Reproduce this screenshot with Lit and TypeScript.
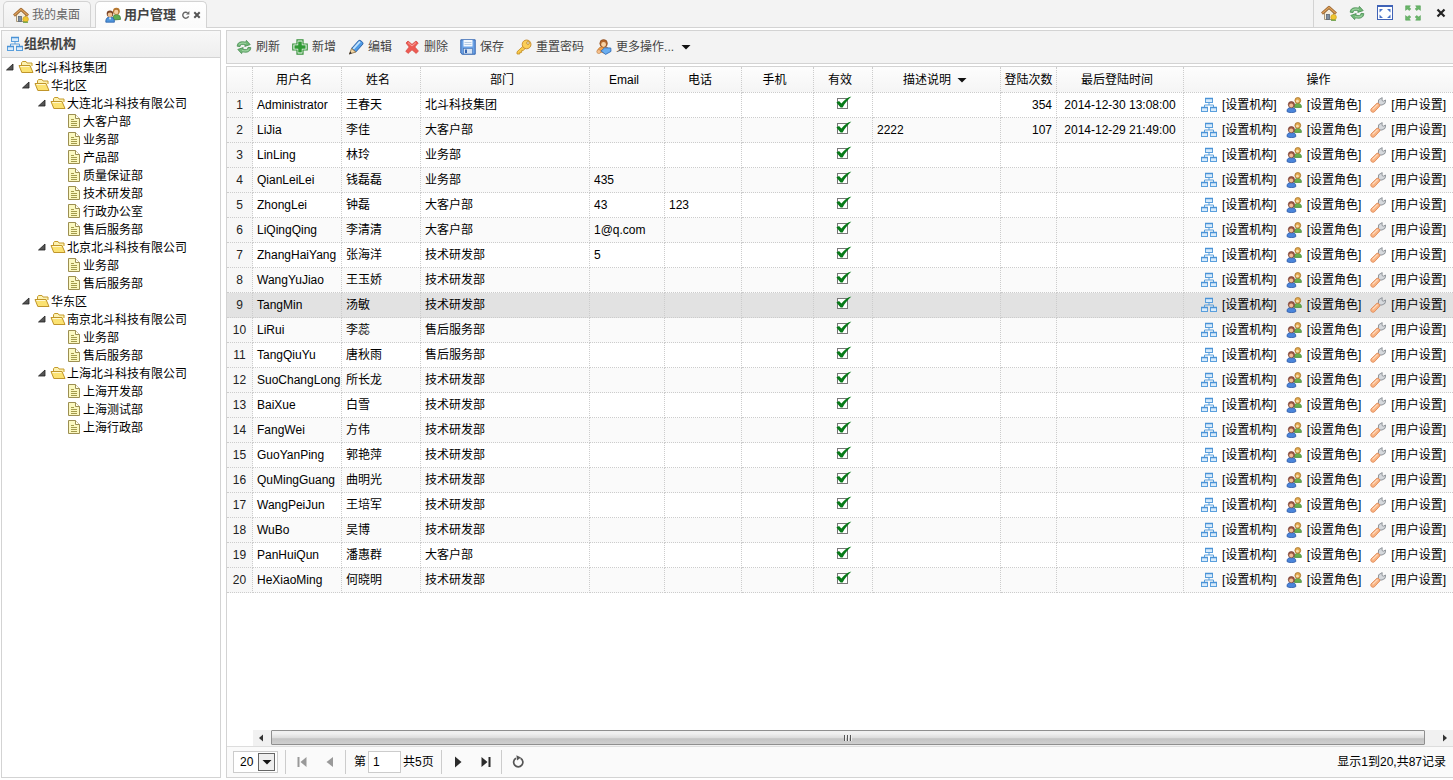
import { LitElement, html, css, svg, nothing, TemplateResult } from "lit";
import { customElement, property, state } from "lit/decorators.js";
import { classMap } from "lit/directives/class-map.js";

/* ---------- icons, all on a 16px grid ---------- */

const shapes: Record<string, TemplateResult> = {
  home: svg`
    <path d="M3.5 8 V14.5 H12.5 V8 L8 3.8Z" fill="#f4ecdc" stroke="#a89878"/>
    <rect x="5.5" y="9.5" width="3" height="5" fill="#7e8ea0" stroke="#5c6876" stroke-width=".8"/>
    <path d="M1 8.6 L8 2.2 L15 8.6" fill="none" stroke="#9a6630" stroke-width="2.8" stroke-linejoin="round"/>
    <path d="M1.4 8.3 L8 2.4 L14.6 8.3" fill="none" stroke="#dfa25c" stroke-width="1.2"/>
    <circle cx="12.6" cy="12.2" r="2.8" fill="#f0c630" stroke="#c79a1c" stroke-width=".6"/>
    <path d="M10 15.2 H15" stroke="#5f9a3c" stroke-width="1.2"/>`,
  users: svg`
    <path d="M8 13 C7.6 8.8 9 7.6 11.6 7.6 C14.4 7.6 15.6 9.2 15.5 12.4Z" fill="#5fae50" stroke="#3d7c38" stroke-width=".8"/>
    <circle cx="11.4" cy="4.2" r="3.4" fill="#b5762f"/><circle cx="11.2" cy="4.9" r="2.2" fill="#f6cfa0"/>
    <path d="M.8 15.2 C.6 11.6 2.2 10 5 10 C8 10 9.6 11.6 9.4 15.2Z" fill="#4f96dd" stroke="#2a5fa8" stroke-width=".8"/>
    <path d="M4 10.4 L5 13 L6.2 10.4Z" fill="#fff"/>
    <circle cx="5" cy="6.8" r="3.3" fill="#7c4526"/><circle cx="5" cy="7.7" r="2.3" fill="#f3c596"/>`,
  role: svg`
    <path d="M8.4 10.4 C8.2 7.6 9.4 6.4 11.6 6.4 C14 6.4 15.5 7.4 15.4 10.4Z" fill="#6ab04c" stroke="#478a36" stroke-width=".8"/>
    <circle cx="11.8" cy="3.4" r="2.9" fill="#e0a84e" stroke="#a8742a" stroke-width=".8"/><circle cx="11.4" cy="4.2" r="1.4" fill="#f7dcae"/>
    <path d="M1 14.6 C.8 11.6 2.6 10.6 5.4 10.6 C8.2 10.6 10 11.6 9.8 14.6 C8 16 3 16 1 14.6Z" fill="#4a86dc" stroke="#2b58a6" stroke-width=".8"/>
    <circle cx="5.4" cy="7.6" r="3.1" fill="#9c5a44" stroke="#74382c" stroke-width=".7"/><circle cx="5.2" cy="8.5" r="2" fill="#f0bd96"/>`,
  org: svg`
    <g fill="#d9ebfb" stroke="#5a9fdc"><rect x="4.5" y="1.5" width="7" height="4"/><rect x=".5" y="10.5" width="6" height="4"/><rect x="9.5" y="10.5" width="6" height="4"/></g>
    <path d="M8 5.5 V8 M3.5 10.5 V8 H12.5 V10.5" fill="none" stroke="#5a9fdc"/>
    <path d="M4 1.5 H12 M0 10.5 H7 M9 10.5 H16" stroke="#4a92d6" stroke-width="1.4"/>`,
  folder: svg`
    <path d="M3.5 13 V3.8 L4.5 2.5 H8 L9 4 H14 V7" fill="#fdf2b0" stroke="#c59b2c"/>
    <path d="M1 6.5 H12 L15 13.5 H3.8Z" fill="#fbe272" stroke="#c0952a" stroke-linejoin="round"/>
    <path d="M2.4 7.5 H11.4" stroke="#fff8d0"/>`,
  page: svg`
    <path d="M2.5 1.5 H9.5 L13.5 5.5 V14.5 H2.5Z" fill="#fbf8c0" stroke="#9c8f52"/>
    <path d="M9.5 1.5 V5.5 H13.5" fill="#fffef0" stroke="#9c8f52"/>
    <path d="M5 6.5 H8 M5 8.5 H11 M5 10.5 H11 M5 12.5 H11" stroke="#a39a4c"/>`,
  refresh: svg`
    <path d="M1.2 7.2 C1.4 3.4 4.6 2 9.6 3.2 L10.4 1.4 L14.2 5.6 L8.8 7.4 L9.2 5.8 C6 4.8 4.4 5.4 4 7.6Z" fill="#72b878" stroke="#468c50" stroke-width=".8" stroke-linejoin="round"/>
    <path d="M14.8 8.6 C14.6 12.6 11.4 14 6.4 12.8 L5.6 14.6 L1.8 10.4 L7.2 8.6 L6.8 10.2 C10 11.2 11.6 10.6 12 8.4Z" fill="#72b878" stroke="#468c50" stroke-width=".8" stroke-linejoin="round"/>
    <path d="M2.8 5.6 C4.4 3.8 7 3.8 10 4.4 M13.2 10.4 C11.6 12.2 9 12.2 6 11.6" fill="none" stroke="#b4dfb6" stroke-width=".8"/>`,
  add: svg`
    <path d="M5 .8 H11 V5 H15.2 V11 H11 V15.2 H5 V11 H.8 V5 H5Z" fill="#fff" stroke="#36913a" stroke-width="1.2"/>
    <path d="M8 2.4 V13.6 M2.4 8 H13.6" stroke="#2f9a34" stroke-width="3.6"/>`,
  edit: svg`
    <path d="M3.6 9.4 L10.6 1.6 C12 .4 15.9 3.6 14.8 5.2 L7.8 13Z" fill="#4f9be6" stroke="#23589e" stroke-width=".9"/>
    <path d="M5.2 10 L12 2.6" stroke="#c4e4fd" stroke-width="1.8"/>
    <path d="M3.6 9.4 L7.8 13 L1.4 15 Z" fill="#f4d8a4" stroke="#86683c" stroke-width=".8"/>
    <path d="M1 15.4 L2.2 12.6 L3.8 14.2Z" fill="#2c2c34"/>`,
  remove: svg`
    <path d="M2 4 L4 2 L8 5.4 L12 2 L14.2 4 L10.8 8 L14.4 12 L12.2 14.4 L8 10.8 L4 14.4 L1.8 12.2 L5.2 8Z" fill="#ee5a52" stroke="#d64b45" stroke-width=".8" stroke-linejoin="round"/>
    <path d="M4 3.6 L8 7 L12 3.6" fill="none" stroke="#f9a59e"/>`,
  save: svg`
    <path d="M.8 .8 H15.2 V15.2 H2 L.8 14Z" fill="#6aa2e6" stroke="#3464b0"/>
    <rect x="3.5" y="1" width="9" height="6.5" fill="#f3f8fe"/><path d="M4.5 3.5 H11.5 M4.5 5.5 H11.5" stroke="#a8c2de" stroke-width=".8"/>
    <rect x="3.5" y="9.5" width="9" height="5.5" fill="#d6e3f3" stroke="#4a78b8" stroke-width=".7"/><rect x="5" y="10.5" width="2" height="3.5" fill="#3464b0"/>`,
  key: svg`
    <path d="M6.8 7.4 L1 12.8 V15 H3.8 V13.4 H5.6 V11.6 H7.2 L9 9.6Z" fill="#fbca4c" stroke="#c08a1e" stroke-width=".8" stroke-linejoin="round"/>
    <circle cx="10.6" cy="5.4" r="4.4" fill="#fbce58" stroke="#c4882a" stroke-width=".9"/>
    <circle cx="12" cy="4" r="1.3" fill="#fff" stroke="#b27c1e" stroke-width=".8"/>`,
  more: svg`
    <path d="M1.6 12 C2 8.6 5 7.6 8 7.6 C11 7.6 13 9 13 12 L8 14Z" fill="#f0a04a" stroke="#b86a28" stroke-width=".7"/>
    <circle cx="7.6" cy="4.4" r="3.8" fill="#b5672c" stroke="#85461d" stroke-width=".6"/><circle cx="7.6" cy="5.5" r="2.4" fill="#f8d2a4"/>
    <path d="M5 12 L8.6 8.8 L14.8 9 L15 12.4 L9.6 15.4Z" fill="#6aaef0" stroke="#2c67b4" stroke-width=".8" stroke-linejoin="round"/>
    <circle cx="2.8" cy="12.6" r="2" fill="#f6c08c" stroke="#b97a3e" stroke-width=".6"/>`,
  wrench: svg`
    <path d="M8.4 6.2 L8.6 2.8 L12.2 .6 L12 3.4 L13.2 4.2 L15.7 3 L15 6.4 L12 8 L10 8 L8.6 9Z" fill="#d6d9dd" stroke="#868b92" stroke-width=".9" stroke-linejoin="round"/>
    <path d="M1 12 L7 6.2 C8.6 6 10.2 7.6 9.8 9 L4.2 15 C2 16 0 14 1 12Z" fill="#f9b381" stroke="#e08a58" stroke-width=".9"/>
    <path d="M2.6 12.4 L7.6 7.6" stroke="#fddcc2" stroke-width="1.2"/>`,
  full: svg`
    <rect x=".5" y=".5" width="15" height="14" fill="#fff" stroke="#3f62b6"/><path d="M.5 1.5 H15.5" stroke="#3f62b6"/>
    <path d="M2.5 4 H6 L2.5 7.4Z M13.5 4 H10 L13.5 7.4Z M2.5 13 H6 L2.5 9.6Z M13.5 13 H10 L13.5 9.6Z" fill="#4a74c8"/>`,
  expand: svg`
    <g fill="#6ab66a" stroke="#4a9a4e" stroke-width=".5"><path d="M.6 .8 H5.4 L4.2 2.2 L5.8 4 L4.4 5.4 L2.2 4 L.6 5.4Z"/><path d="M15.4 .8 H10.6 L11.8 2.2 L10.2 4 L11.6 5.4 L13.8 4 L15.4 5.4Z"/><path d="M.6 15.2 H5.4 L4.2 13.8 L5.8 12 L4.4 10.6 L2.2 12 L.6 10.6Z"/><path d="M15.4 15.2 H10.6 L11.8 13.8 L10.2 12 L11.6 10.6 L13.8 12 L15.4 10.6Z"/></g>`,
  close: svg`<path d="M4.5 4.5 L11.5 11.5 M11.5 4.5 L4.5 11.5" stroke="#222" stroke-width="2.2"/>`,
  down: svg`<path d="M3.5 6 H12.5 L8 10.5Z" fill="#111"/>`,
  node: svg`<path d="M11 5 V11 H4.5Z" fill="#555" stroke="#222" stroke-width=".8"/>`,
  first: svg`<path d="M3.5 3 H5.5 V13 H3.5Z M12.5 3 V13 L6.5 8Z" fill="#999"/>`,
  prev: svg`<path d="M11 3 V13 L4.5 8Z" fill="#999"/>`,
  next: svg`<path d="M5 2.5 V13.5 L11.5 8Z" fill="#2b2b2b"/>`,
  last: svg`<path d="M3.5 3 V13 L9.5 8Z M10.5 3 H12.5 V13 H10.5Z" fill="#2b2b2b"/>`,
  reload: svg`<path d="M10.5 4.2 A4.6 4.6 0 1 1 6 4.2" fill="none" stroke="#555" stroke-width="1.7"/><path d="M6.4 1.2 L11 3.4 L7 6.4Z" fill="#555"/>`,
  tabReload: svg`<path d="M10.6 9.2 A3 3 0 1 1 9.6 5.8" fill="none" stroke="#666" stroke-width="1.4"/><path d="M11.4 4 V7.6 H8Z" fill="#666"/>`,
  tabClose: svg`<path d="M5.3 5.3 L10.7 10.7 M10.7 5.3 L5.3 10.7" stroke="#555" stroke-width="2"/>`,
  left: svg`<path d="M9 4.5 V11.5 L5 8Z" fill="#333"/>`,
  right: svg`<path d="M6 4.5 V11.5 L10 8Z" fill="#333"/>`,
};

const icon = (name: string) =>
  html`<svg class="icon" width="16" height="16" viewBox="0 0 16 16" aria-hidden="true">${shapes[name]}</svg>`;

const base = css`
  * { box-sizing: border-box; }
  .icon { display: block; flex: none; }
  button, input, select { font: inherit; color: inherit; margin: 0; }
  button { padding: 0; border: 0; background: none; display: flex; align-items: center; cursor: pointer; white-space: nowrap; }
  a { color: inherit; text-decoration: none; }
`;

/* ---------- organisation tree ---------- */

interface OrgNode { name: string; children?: OrgNode[]; }
const leaves = (...names: string[]): OrgNode[] => names.map((name) => ({ name }));

const ORG: OrgNode[] = [{
  name: "北斗科技集团",
  children: [
    { name: "华北区", children: [
      { name: "大连北斗科技有限公司", children: leaves("大客户部", "业务部", "产品部", "质量保证部", "技术研发部", "行政办公室", "售后服务部") },
      { name: "北京北斗科技有限公司", children: leaves("业务部", "售后服务部") },
    ] },
    { name: "华东区", children: [
      { name: "南京北斗科技有限公司", children: leaves("业务部", "售后服务部") },
      { name: "上海北斗科技有限公司", children: leaves("上海开发部", "上海测试部", "上海行政部") },
    ] },
  ],
}];

@customElement("org-tree")
export class OrgTree extends LitElement {
  static styles = [base, css`
    :host { display: block; color: #000; }
    ul { list-style: none; margin: 0; padding: 0; }
    ul ul { padding-left: 16px; }
    .node { width: 100%; height: 18px; }
    .leaf { padding-left: 16px; }
    .text { margin-left: 1px; padding-top: 1px; }
  `];
  @property({ attribute: false }) nodes: OrgNode[] = [];
  @state() private closed = new Set<OrgNode>();

  private toggle(n: OrgNode) {
    const next = new Set(this.closed);
    next.has(n) ? next.delete(n) : next.add(n);
    this.closed = next;
  }

  private list(nodes: OrgNode[]): TemplateResult {
    return html`<ul>${nodes.map((n) => html`<li>
      <button class=${classMap({ node: true, leaf: !n.children })} @click=${() => this.toggle(n)}>
        ${n.children ? icon("node") : nothing}${icon(n.children ? "folder" : "page")}<span class="text">${n.name}</span>
      </button>
      ${n.children && !this.closed.has(n) ? this.list(n.children) : nothing}
    </li>`)}</ul>`;
  }
  render() { return this.list(this.nodes); }
}

/* ---------- user grid ---------- */

interface User { user: string; name: string; dept: string; email?: string; phone?: string; note?: string; count?: string; last?: string; }

const u = (user: string, name: string, dept: string, extra: Partial<User> = {}): User => ({ user, name, dept, ...extra });

const USERS: User[] = [
  u("Administrator", "王春天", "北斗科技集团", { count: "354", last: "2014-12-30 13:08:00" }),
  u("LiJia", "李佳", "大客户部", { note: "2222", count: "107", last: "2014-12-29 21:49:00" }),
  u("LinLing", "林玲", "业务部"),
  u("QianLeiLei", "钱磊磊", "业务部", { email: "435" }),
  u("ZhongLei", "钟磊", "大客户部", { email: "43", phone: "123" }),
  u("LiQingQing", "李清清", "大客户部", { email: "1@q.com" }),
  u("ZhangHaiYang", "张海洋", "技术研发部", { email: "5" }),
  u("WangYuJiao", "王玉娇", "技术研发部"),
  u("TangMin", "汤敏", "技术研发部"),
  u("LiRui", "李蕊", "售后服务部"),
  u("TangQiuYu", "唐秋雨", "售后服务部"),
  u("SuoChangLong", "所长龙", "技术研发部"),
  u("BaiXue", "白雪", "技术研发部"),
  u("FangWei", "方伟", "技术研发部"),
  u("GuoYanPing", "郭艳萍", "技术研发部"),
  u("QuMingGuang", "曲明光", "技术研发部"),
  u("WangPeiJun", "王培军", "技术研发部"),
  u("WuBo", "吴博", "技术研发部"),
  u("PanHuiQun", "潘惠群", "大客户部"),
  u("HeXiaoMing", "何晓明", "技术研发部"),
];

@customElement("user-grid")
export class UserGrid extends LitElement {
  static styles = [base, css`
    :host { display: block; overflow: hidden; }
    table { width: 100%; table-layout: fixed; border-collapse: separate; border-spacing: 0; }
    .c-no { width: 26px; } .c-user { width: 89px; } .c-name { width: 79px; } .c-dept { width: 169px; }
    .c-email { width: 75px; } .c-phone { width: 77px; } .c-mobile { width: 72px; } .c-valid { width: 59px; }
    .c-note { width: 128px; } .c-count { width: 56px; } .c-last { width: 127px; }
    th, td { padding: 0 4px; border: 0 dotted #ccc; border-width: 0 1px 1px 0; white-space: nowrap; overflow: hidden; color: #000; }
    th:last-child, td:last-child { border-right: 0; }
    th { height: 26px; padding: 0 6px 0 0; font-weight: normal; background: linear-gradient(#fdfdfd, #f5f5f5); }
    th.flush { padding: 0; }
    td { height: 25px; text-align: left; }
    .sort { display: flex; align-items: center; justify-content: center; width: 100%; gap: 3px; }
    tbody tr:nth-child(even) td { background: #fafafa; }
    tbody tr td.no, tbody tr:nth-child(even) td.no { text-align: center; padding: 0; background: #f7f7f7; color: #222; }
    tbody tr.on td { background: #e2e2e2; }
    td.num { text-align: right; }
    td.stamp { text-align: center; }
    .tick {
      appearance: none; display: block; width: 16px; height: 14px; margin: 0 0 4px 18px;
      background: url("data:image/svg+xml,%3Csvg xmlns='http://www.w3.org/2000/svg' width='16' height='14'%3E%3Crect x='1.5' y='2.5' width='10' height='10' fill='%23fff' stroke='%23777'/%3E%3Cpath d='M.4 6.6 L3 5 L5.4 7.4 C8 4 11 1.6 15.4 .4 C12 3.5 8.5 7.5 6.6 11.4 L4.6 11.4Z' fill='%23067a18'/%3E%3C/svg%3E") no-repeat;
    }
    .acts { display: flex; justify-content: flex-end; gap: 9px; padding-right: 3px; }
    .acts a { display: flex; align-items: center; gap: 5px; }
  `];
  @property({ attribute: false }) users: User[] = [];
  @state() private selected = 8;

  render() {
    return html`<table>
      <colgroup>
        ${["no", "user", "name", "dept", "email", "phone", "mobile", "valid", "note", "count", "last", "ops"].map((c) => html`<col class="c-${c}">`)}
      </colgroup>
      <thead><tr>
        <th></th><th>用户名</th><th>姓名</th><th>部门</th><th>Email</th><th>电话</th><th>手机</th><th>有效</th>
        <th class="flush"><button class="sort">描述说明${icon("down")}</button></th><th class="flush">登陆次数</th><th>最后登陆时间</th><th class="flush">操作</th>
      </tr></thead>
      <tbody>${this.users.map((r, i) => html`
        <tr class=${classMap({ on: i === this.selected })} @click=${() => (this.selected = i)}>
          <td class="no">${i + 1}</td><td>${r.user}</td><td>${r.name}</td><td>${r.dept}</td>
          <td>${r.email}</td><td>${r.phone}</td><td></td>
          <td><input class="tick" type="checkbox" checked aria-label="有效"></td>
          <td>${r.note}</td><td class="num">${r.count}</td><td class="stamp">${r.last}</td>
          <td><div class="acts">
            <a href="#org">${icon("org")}[设置机构]</a>
            <a href="#role">${icon("role")}[设置角色]</a>
            <a href="#user">${icon("wrench")}[用户设置]</a>
          </div></td>
        </tr>`)}
      </tbody>
    </table>`;
  }
}

/* ---------- page ---------- */

const TOOLS: [string, string][] = [
  ["refresh", "刷新"], ["add", "新增"], ["edit", "编辑"], ["remove", "删除"], ["save", "保存"], ["key", "重置密码"],
];

@customElement("app-root")
export class AppRoot extends LitElement {
  static styles = [base, css`
    :host {
      display: flex; flex-direction: column; height: 100vh; overflow: hidden; background: #fff; color: #000;
      font: 12px/16px "Liberation Sans", Arial, "Noto Sans CJK SC", sans-serif;
    }
    .top { display: flex; justify-content: space-between; height: 28px; flex: none; background: #f3f3f3; border-bottom: 1px solid #d3d3d3; }
    .tabs { display: flex; align-items: flex-end; gap: 4px; padding-left: 3px; }
    .tab { display: flex; align-items: center; height: 26px; padding: 0 10px 0 9px; gap: 3px; border: 1px solid #d3d3d3; border-bottom: 0; border-radius: 5px 5px 0 0; background: linear-gradient(#f8f8f8, #eeeeee); color: #666; }
    .tab.on { height: 27px; margin-bottom: -1px; padding: 0 4px 0 9px; background: linear-gradient(#fff, #fafafa); color: #444; }
    .title { font-size: 13px; font-weight: bold; color: #444; }
    .tab-tools { display: flex; margin-left: 1px; }
    .tab-tools button { width: 11px; justify-content: center; overflow: hidden; }
    .tools { display: flex; align-items: center; gap: 12px; padding: 0 4px 2px 7px; border-left: 1px solid #d3d3d3; }
    .main { flex: 1; display: flex; gap: 5px; min-height: 0; padding: 2px 0 2px 1px; }
    .side { width: 220px; flex: none; border: 1px solid #d3d3d3; overflow: hidden; }
    .head { display: flex; align-items: center; gap: 1px; height: 27px; padding-left: 5px; border-bottom: 1px solid #d3d3d3; background: linear-gradient(#f8f8f8, #eeeeee); }
    .work { flex: 1; min-width: 0; display: flex; flex-direction: column; gap: 2px; }
    .bar { display: flex; align-items: center; gap: 12px; height: 34px; flex: none; padding-left: 9px; background: #f3f3f3; border: 1px solid #d3d3d3; border-right: 0; color: #444; }
    .bar button { gap: 4px; }
    .panel { flex: 1; min-height: 0; display: flex; flex-direction: column; border: 1px solid #d3d3d3; border-right: 0; }
    .grid { flex: 1; min-height: 0; }
    .scroll { display: flex; height: 16px; flex: none; margin-left: 26px; background: #f1f1f1; }
    .scroll button { width: 18px; justify-content: center; }
    .scroll .end { width: 28px; justify-content: flex-end; }
    .thumb { flex: 1; height: 15px; border: 1px solid #8f8f8f; border-radius: 1px; background: linear-gradient(#f0f0f0 0 20%, #dedede 50%, #c4c4c4 60%, #cfcfcf); display: flex; justify-content: center; align-items: center; gap: 1px; }
    .thumb i { width: 2px; height: 6px; background: #555; border-right: 1px solid #eee; }
    .pager { display: flex; align-items: center; height: 31px; flex: none; padding: 0 7px 0 6px; background: #fafafa; border-top: 1px solid #ddd; }
    .size { display: flex; align-items: center; width: 45px; height: 22px; margin-right: 7px; border: 1px solid #ccc; background: #fff; position: relative; }
    .size select { appearance: none; width: 100%; height: 20px; border: 0; padding: 0 6px; background: none; }
    .drop { position: absolute; right: 2px; top: 1px; width: 17px; height: 18px; border: 1px solid #666; background: #eee; display: flex; align-items: center; justify-content: center; pointer-events: none; overflow: hidden; }
    .sep { width: 1px; height: 24px; background: #ccc; }
    .pager button { width: 28px; height: 24px; justify-content: center; }
    .step { display: flex; padding: 0 1px 0 2px; }
    .goto { display: flex; align-items: center; gap: 2px; padding: 0 7px 0 8px; }
    .goto input { width: 33px; height: 22px; padding: 0 4px; border: 1px solid #ccc; background: #fff; }
    .total { margin-left: auto; }
  `];

  render() {
    return html`
      <header class="top">
        <nav class="tabs">
          <a class="tab" href="#desk">${icon("home")}我的桌面</a>
          <div class="tab on">${icon("users")}<span class="title">用户管理</span>
            <span class="tab-tools"><button aria-label="刷新">${icon("tabReload")}</button><button aria-label="关闭">${icon("tabClose")}</button></span>
          </div>
        </nav>
        <div class="tools">
          ${[["home", "主页"], ["refresh", "刷新"], ["full", "全屏"], ["expand", "展开"], ["close", "关闭"]].map(
            ([n, l]) => html`<button aria-label=${l}>${icon(n)}</button>`)}
        </div>
      </header>
      <div class="main">
        <aside class="side">
          <div class="head">${icon("org")}<span class="title">组织机构</span></div>
          <org-tree .nodes=${ORG}></org-tree>
        </aside>
        <section class="work">
          <div class="bar">
            ${TOOLS.map(([n, l]) => html`<button>${icon(n)}${l}</button>`)}
            <button>${icon("more")}更多操作...${icon("down")}</button>
          </div>
          <div class="panel">
            <user-grid class="grid" .users=${USERS}></user-grid>
            <div class="scroll">
              <button aria-label="向左">${icon("left")}</button>
              <div class="thumb"><i></i><i></i><i></i></div>
              <button class="end" aria-label="向右">${icon("right")}</button>
            </div>
            <footer class="pager">
              <div class="size"><select aria-label="每页条数"><option>20</option><option>50</option></select><span class="drop">${icon("down")}</span></div>
              <span class="sep"></span>
              <div class="step"><button aria-label="首页">${icon("first")}</button><button aria-label="上一页">${icon("prev")}</button></div>
              <span class="sep"></span>
              <label class="goto">第<input type="text" value="1">共5页</label>
              <span class="sep"></span>
              <div class="step"><button aria-label="下一页">${icon("next")}</button><button aria-label="末页">${icon("last")}</button></div>
              <span class="sep"></span>
              <div class="step"><button aria-label="刷新">${icon("reload")}</button></div>
              <span class="total">显示1到20,共87记录</span>
            </footer>
          </div>
        </section>
      </div>`;
  }
}
